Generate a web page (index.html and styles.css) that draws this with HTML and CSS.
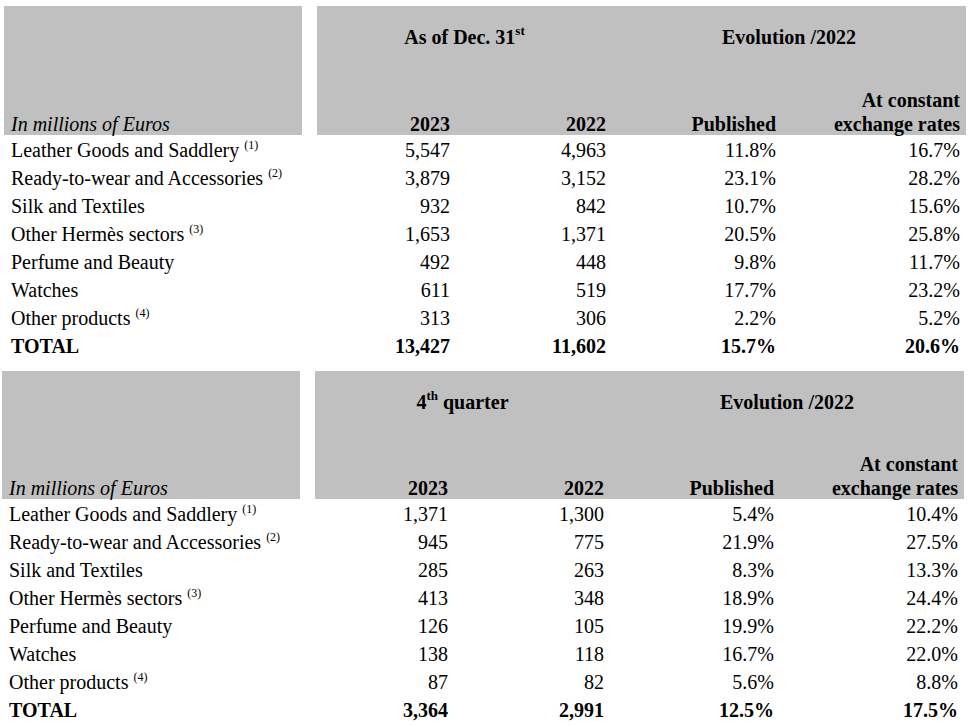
FILE: index.html
```html
<!DOCTYPE html>
<html lang="en">
<head>
<meta charset="utf-8">
<title>Revenue by sector</title>
<link rel="stylesheet" href="styles.css">
</head>
<body>
<div class="tbl t1">
  <div class="hd-label"><span>In millions of Euros</span></div>
  <div class="hd-gap"></div>
  <div class="hd-grp g1">As of Dec. 31<sup class="hs">st</sup></div>
  <div class="hd-grp g2">Evolution /2022</div>
  <div class="hd-col c3"><span>2023</span></div>
  <div class="hd-col c4"><span>2022</span></div>
  <div class="hd-col c5"><span>Published</span></div>
  <div class="hd-col c6"><span>At constant<br>exchange rates</span></div>

  <div class="lbl">Leather Goods and Saddlery <sup>(1)</sup></div><div></div><div class="num">5,547</div><div class="num">4,963</div><div class="num">11.8%</div><div class="num">16.7%</div>
  <div class="lbl">Ready-to-wear and Accessories <sup>(2)</sup></div><div></div><div class="num">3,879</div><div class="num">3,152</div><div class="num">23.1%</div><div class="num">28.2%</div>
  <div class="lbl">Silk and Textiles</div><div></div><div class="num">932</div><div class="num">842</div><div class="num">10.7%</div><div class="num">15.6%</div>
  <div class="lbl">Other Hermès sectors <sup>(3)</sup></div><div></div><div class="num">1,653</div><div class="num">1,371</div><div class="num">20.5%</div><div class="num">25.8%</div>
  <div class="lbl">Perfume and Beauty</div><div></div><div class="num">492</div><div class="num">448</div><div class="num">9.8%</div><div class="num">11.7%</div>
  <div class="lbl">Watches</div><div></div><div class="num">611</div><div class="num">519</div><div class="num">17.7%</div><div class="num">23.2%</div>
  <div class="lbl">Other products <sup>(4)</sup></div><div></div><div class="num">313</div><div class="num">306</div><div class="num">2.2%</div><div class="num">5.2%</div>
  <div class="lbl total">TOTAL</div><div></div><div class="num total">13,427</div><div class="num total">11,602</div><div class="num total">15.7%</div><div class="num total">20.6%</div>
</div>

<div class="tbl t2">
  <div class="hd-label"><span>In millions of Euros</span></div>
  <div class="hd-gap"></div>
  <div class="hd-grp g1">4<sup class="hs">th</sup> quarter</div>
  <div class="hd-grp g2">Evolution /2022</div>
  <div class="hd-col c3"><span>2023</span></div>
  <div class="hd-col c4"><span>2022</span></div>
  <div class="hd-col c5"><span>Published</span></div>
  <div class="hd-col c6"><span>At constant<br>exchange rates</span></div>

  <div class="lbl">Leather Goods and Saddlery <sup>(1)</sup></div><div></div><div class="num">1,371</div><div class="num">1,300</div><div class="num">5.4%</div><div class="num">10.4%</div>
  <div class="lbl">Ready-to-wear and Accessories <sup>(2)</sup></div><div></div><div class="num">945</div><div class="num">775</div><div class="num">21.9%</div><div class="num">27.5%</div>
  <div class="lbl">Silk and Textiles</div><div></div><div class="num">285</div><div class="num">263</div><div class="num">8.3%</div><div class="num">13.3%</div>
  <div class="lbl">Other Hermès sectors <sup>(3)</sup></div><div></div><div class="num">413</div><div class="num">348</div><div class="num">18.9%</div><div class="num">24.4%</div>
  <div class="lbl">Perfume and Beauty</div><div></div><div class="num">126</div><div class="num">105</div><div class="num">19.9%</div><div class="num">22.2%</div>
  <div class="lbl">Watches</div><div></div><div class="num">138</div><div class="num">118</div><div class="num">16.7%</div><div class="num">22.0%</div>
  <div class="lbl">Other products <sup>(4)</sup></div><div></div><div class="num">87</div><div class="num">82</div><div class="num">5.6%</div><div class="num">8.8%</div>
  <div class="lbl total">TOTAL</div><div></div><div class="num total">3,364</div><div class="num total">2,991</div><div class="num total">12.5%</div><div class="num total">17.5%</div>
</div>
</body>
</html>
```
FILE: styles.css
```css
html, body {
  margin: 0;
  padding: 0;
  background: #fff;
}
body {
  font-family: "Liberation Serif", "Times New Roman", serif;
  font-size: 20px;
  color: #000;
}
.tbl {
  display: grid;
  grid-template-columns: 298px 15px 139px 156px 170px 184px;
  grid-template-rows: 81px 48px;
  grid-auto-rows: 28px;
  width: 962px;
}
.t1 {
  margin: 6px 0 0 4px;
}
.t2 {
  margin: 12px 0 0 2px;
  grid-template-rows: 80px 48px;
}
.hd-label {
  grid-row: 1 / 3;
  grid-column: 1;
  background: #c0c0c0;
  font-style: italic;
  line-height: 24px;
  padding-left: 7px;
  display: flex;
  flex-direction: column;
  justify-content: flex-end;
}
.hd-label span,
.hd-col span {
  display: block;
  margin-bottom: -1px;
}
.hd-gap {
  grid-row: 1 / 3;
  grid-column: 2;
}
.hd-grp {
  grid-row: 1;
  background: #c0c0c0;
  font-weight: bold;
  text-align: center;
  line-height: 24px;
  padding-top: 19px;
}
.g1 { grid-column: 3 / 5; }
.g2 { grid-column: 5 / 7; }
.hd-col {
  grid-row: 2;
  background: #c0c0c0;
  font-weight: bold;
  line-height: 24px;
  text-align: right;
  padding-right: 6px;
  display: flex;
  flex-direction: column;
  justify-content: flex-end;
}
.c3 { grid-column: 3; }
.c4 { grid-column: 4; }
.c5 { grid-column: 5; }
.c6 { grid-column: 6; }
.lbl {
  grid-column: 1;
  line-height: 26px;
  padding-top: 2px;
  padding-left: 7px;
  white-space: nowrap;
}
.num {
  line-height: 26px;
  padding-top: 2px;
  text-align: right;
  padding-right: 6px;
}
.total {
  font-weight: bold;
}
sup {
  font-size: 12px;
  line-height: 0;
  vertical-align: 8px;
}
sup.hs {
  font-size: 13px;
  vertical-align: 9px;
}
```
